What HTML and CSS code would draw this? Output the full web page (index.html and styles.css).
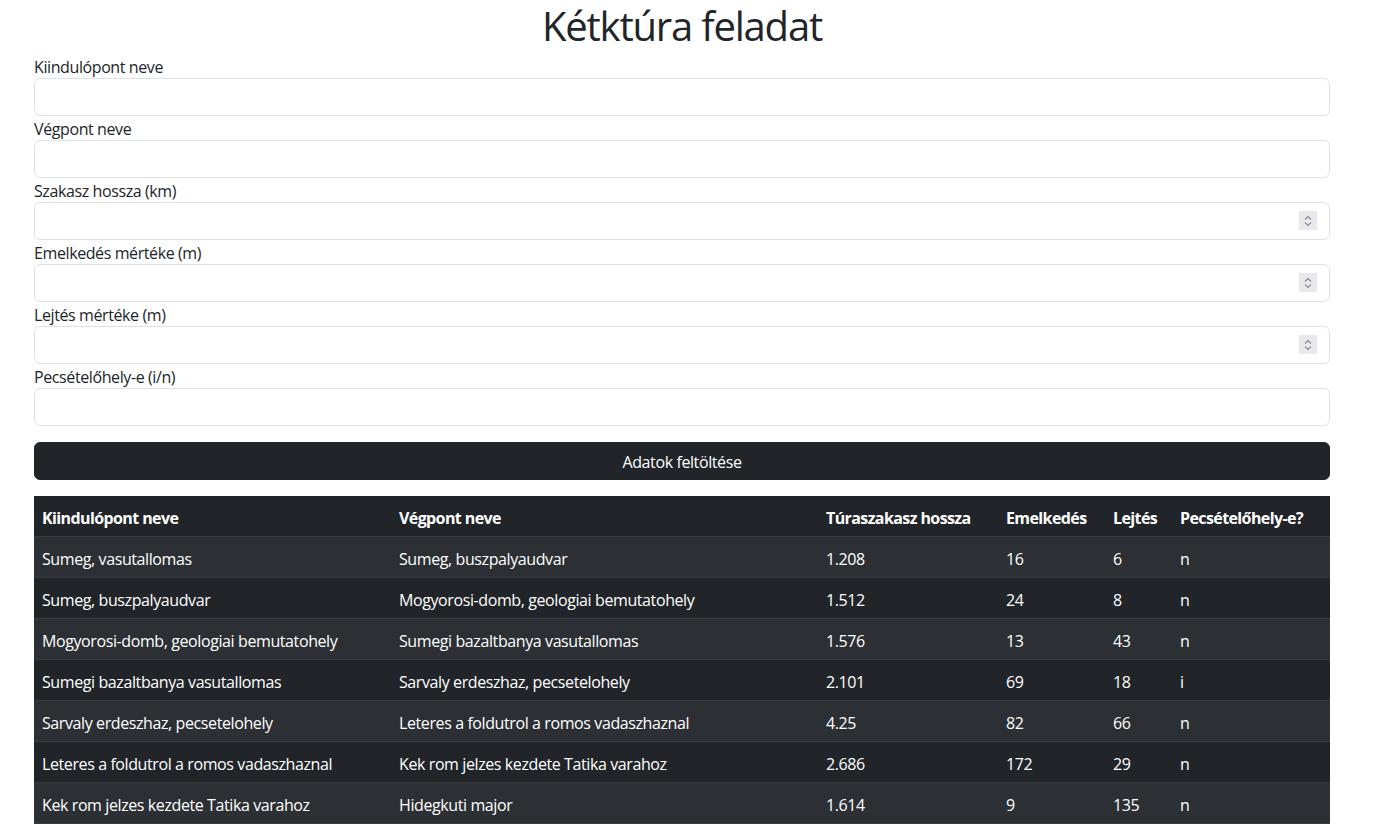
FILE: index.html
```html
<!DOCTYPE html>
<html lang="hu">
<head>
<meta charset="utf-8">
<title>Kétktúra feladat</title>
<link rel="stylesheet" href="styles.css">
</head>
<body>
<main class="page">
  <h1 class="title">Kétktúra feladat</h1>
  <form class="form">
    <label class="label" for="f1">Kiindulópont neve</label>
    <div class="field"><input class="input" id="f1" type="text"></div>
    <label class="label" for="f2">Végpont neve</label>
    <div class="field"><input class="input" id="f2" type="text"></div>
    <label class="label" for="f3">Szakasz hossza (km)</label>
    <div class="field"><input class="input" id="f3" type="text"><span class="spin"><svg width="10" height="14" viewBox="0 0 10 14"><path d="M2 5.5 L5 2.5 L8 5.5" fill="none" stroke="#8a8a90" stroke-width="1.2"/><path d="M2 8.5 L5 11.5 L8 8.5" fill="none" stroke="#8a8a90" stroke-width="1.2"/></svg></span></div>
    <label class="label" for="f4">Emelkedés mértéke (m)</label>
    <div class="field"><input class="input" id="f4" type="text"><span class="spin"><svg width="10" height="14" viewBox="0 0 10 14"><path d="M2 5.5 L5 2.5 L8 5.5" fill="none" stroke="#8a8a90" stroke-width="1.2"/><path d="M2 8.5 L5 11.5 L8 8.5" fill="none" stroke="#8a8a90" stroke-width="1.2"/></svg></span></div>
    <label class="label" for="f5">Lejtés mértéke (m)</label>
    <div class="field"><input class="input" id="f5" type="text"><span class="spin"><svg width="10" height="14" viewBox="0 0 10 14"><path d="M2 5.5 L5 2.5 L8 5.5" fill="none" stroke="#8a8a90" stroke-width="1.2"/><path d="M2 8.5 L5 11.5 L8 8.5" fill="none" stroke="#8a8a90" stroke-width="1.2"/></svg></span></div>
    <label class="label" for="f6">Pecsételőhely-e (i/n)</label>
    <div class="field"><input class="input" id="f6" type="text"></div>
    <button class="btn" type="button">Adatok feltöltése</button>
  </form>
  <table class="table">
    <colgroup>
      <col class="c1"><col class="c2"><col class="c3"><col class="c4"><col class="c5"><col class="c6">
    </colgroup>
    <thead>
      <tr><th>Kiindulópont neve</th><th>Végpont neve</th><th>Túraszakasz hossza</th><th>Emelkedés</th><th>Lejtés</th><th>Pecsételőhely-e?</th></tr>
    </thead>
    <tbody>
      <tr><td>Sumeg, vasutallomas</td><td>Sumeg, buszpalyaudvar</td><td>1.208</td><td>16</td><td>6</td><td>n</td></tr>
      <tr><td>Sumeg, buszpalyaudvar</td><td>Mogyorosi-domb, geologiai bemutatohely</td><td>1.512</td><td>24</td><td>8</td><td>n</td></tr>
      <tr><td>Mogyorosi-domb, geologiai bemutatohely</td><td>Sumegi bazaltbanya vasutallomas</td><td>1.576</td><td>13</td><td>43</td><td>n</td></tr>
      <tr><td>Sumegi bazaltbanya vasutallomas</td><td>Sarvaly erdeszhaz, pecsetelohely</td><td>2.101</td><td>69</td><td>18</td><td>i</td></tr>
      <tr><td>Sarvaly erdeszhaz, pecsetelohely</td><td>Leteres a foldutrol a romos vadaszhaznal</td><td>4.25</td><td>82</td><td>66</td><td>n</td></tr>
      <tr><td>Leteres a foldutrol a romos vadaszhaznal</td><td>Kek rom jelzes kezdete Tatika varahoz</td><td>2.686</td><td>172</td><td>29</td><td>n</td></tr>
      <tr><td>Kek rom jelzes kezdete Tatika varahoz</td><td>Hidegkuti major</td><td>1.614</td><td>9</td><td>135</td><td>n</td></tr>
    </tbody>
  </table>
</main>
</body>
</html>
```

FILE: styles.css
```css
* { box-sizing: border-box; }
html, body { margin: 0; padding: 0; }
body {
  font-family: "Open Sans", "Noto Sans", sans-serif;
  font-size: 16px;
  line-height: 24px;
  letter-spacing: -0.4px;
  color: #212529;
  background: #fff;
}
.page {
  margin: 0 45px 0 34px;
}
.title {
  margin: 0 0 2px;
  padding: 0;
  height: 52px;
  font-size: 40px;
  line-height: 52px;
  font-weight: 400;
  letter-spacing: -1.2px;
  text-align: center;
}
.form {
  display: flex;
  flex-direction: column;
}
.label {
  display: block;
  height: 24px;
  padding-top: 2px;
  line-height: 22px;
}
.field {
  position: relative;
}
.input {
  display: block;
  width: 100%;
  height: 38px;
  padding: 6px 12px;
  font: inherit;
  border: 1px solid #dee2e6;
  border-radius: 6px;
  background: #fff;
  outline: none;
}
.spin {
  position: absolute;
  right: 13px;
  top: 9px;
  width: 18px;
  height: 19px;
  background: #e9e9ed;
  display: flex;
  align-items: center;
  justify-content: center;
}
.btn {
  margin-top: 16px;
  height: 38px;
  width: 100%;
  padding: 2px 12px 0;
  font: inherit;
  letter-spacing: -0.4px;
  color: #fff;
  background: #212529;
  border: 1px solid #212529;
  border-radius: 6px;
}
.table {
  margin-top: 16px;
  width: 100%;
  border-collapse: collapse;
  table-layout: fixed;
  color: #fff;
  background: #212529;
}
.c1 { width: 357px; }
.c2 { width: 427px; }
.c3 { width: 180px; }
.c4 { width: 107px; }
.c5 { width: 67px; }
.c6 { width: auto; }
.table th, .table td {
  padding: 10px 8px 6px;
  text-align: left;
  border-bottom: 1px solid #373b3e;
  white-space: nowrap;
  vertical-align: top;
}
.table th { font-weight: 700; letter-spacing: -0.6px; }
.table tbody tr:nth-child(odd) { background: #2c3034; }
```
